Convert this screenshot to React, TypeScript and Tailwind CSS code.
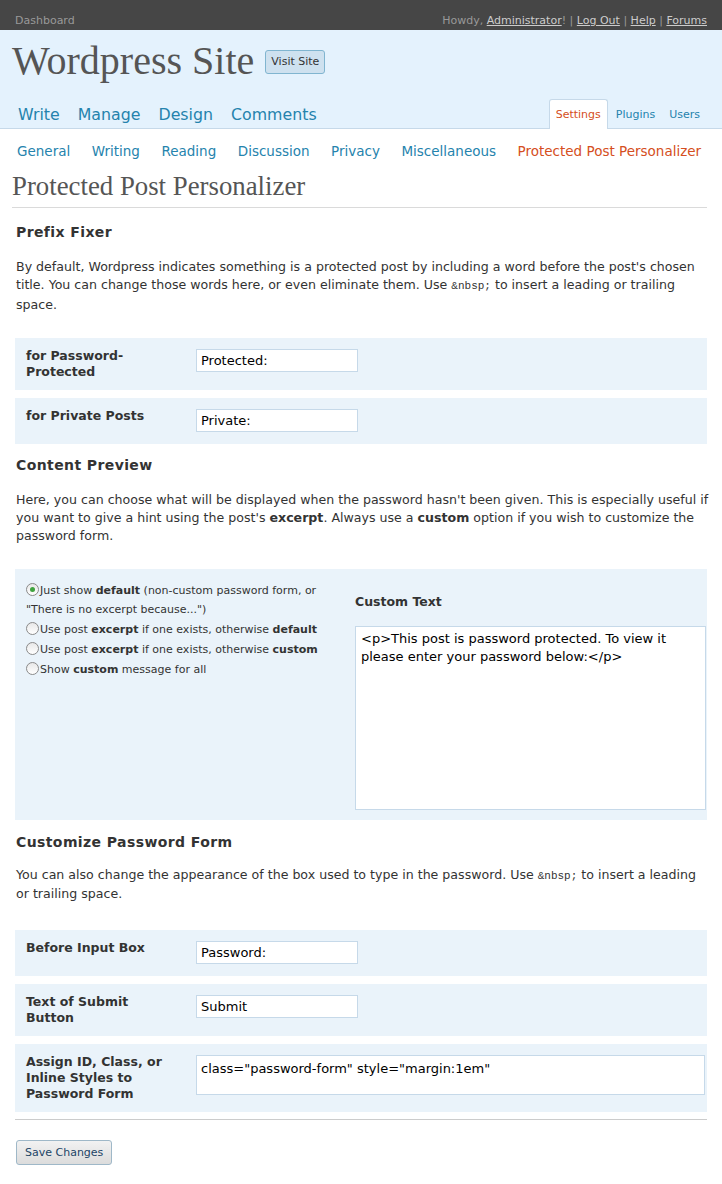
import React from "react";

const Radio = ({ checked = false }: { checked?: boolean }) => (
  <span className="relative inline-block w-[13px] h-[13px] rounded-full border border-[#8a8a8a] bg-gradient-to-b from-[#e8e8e8] to-white align-[-2px] mr-[1px]">
    {checked && <span className="absolute left-[3px] top-[3px] w-[5px] h-[5px] rounded-full bg-[#3fa33f]" />}
  </span>
);

const FieldRow = ({
  label,
  value,
  wide = false,
}: {
  label: string;
  value: string;
  wide?: boolean;
}) => (
  <div className="flex items-start bg-[#eaf3fa] py-[10px] pl-[11px] mb-[8px]">
    <div className="w-[170px] pr-[22px] text-[12.5px] leading-[16px] font-bold text-[#333]">{label}</div>
    {wide ? (
      <div className="mt-[1px] w-[509px] h-[40px] bg-white border border-[#c6d9e9] px-[4px] pt-[3px] text-[13px] text-black">
        {value}
      </div>
    ) : (
      <div className="mt-[1px] mb-[2px] w-[162px] h-[23px] bg-white border border-[#c6d9e9] px-[4px] flex items-center text-[13px] text-black">
        {value}
      </div>
    )}
  </div>
);

const Nbsp = () => <code className="font-['Liberation_Mono',monospace] text-[11px]">&amp;nbsp;</code>;

export default function App() {
  const subnav = ["General", "Writing", "Reading", "Discussion", "Privacy", "Miscellaneous"];

  return (
    <div className="min-h-[1184px] bg-white font-['DejaVu_Sans',sans-serif] text-[#333]">
      {/* admin bar */}
      <div className="h-[30px] bg-[#464646] flex items-center justify-between pl-[15px] pr-[15px] pt-[12px] text-[11px]">
        <span className="text-[#999]">Dashboard</span>
        <span className="text-[#999]">
          Howdy, <a className="text-[#ccc] underline">Administrator</a>! |{" "}
          <a className="text-[#ccc] underline">Log Out</a> | <a className="text-[#ccc] underline">Help</a> |{" "}
          <a className="text-[#ccc] underline">Forums</a>
        </span>
      </div>

      {/* header */}
      <div className="h-[99px] bg-[#e4f2fd] border-b border-[#c6d9e9] flex flex-col">
        <div className="flex items-center pl-[12px] pt-[8px]">
          <h1 className="font-['Liberation_Serif',serif] text-[40px] leading-[46px] text-[#555]">Wordpress Site</h1>
          <span className="ml-[11px] mt-[2px] h-[24px] px-[5px] flex items-center bg-[#cee1ef] border border-[#80b5d0] rounded-[3px] text-[11px] text-[#333]">
            Visit Site
          </span>
        </div>
        <div className="mt-auto flex items-end justify-between pl-[18px] pr-[22px]">
          <div className="flex gap-[18px] text-[15.8px] text-[#2583ad] pb-[1px]">
            <span>Write</span>
            <span>Manage</span>
            <span>Design</span>
            <span>Comments</span>
          </div>
          <div className="flex items-end text-[11px] -mb-[1px]">
            <span className="h-[30px] px-[6px] pt-[2px] flex items-center bg-white border border-b-0 border-[#c6d9e9] rounded-t-[3px] text-[#d54e21]">
              Settings
            </span>
            <span className="h-[30px] pt-[2px] flex items-center ml-[8px] text-[#2583ad]">Plugins</span>
            <span className="h-[30px] pt-[2px] flex items-center ml-[14px] text-[#2583ad]">Users</span>
          </div>
        </div>
      </div>

      {/* sub nav */}
      <div className="h-[44px] flex items-center gap-[21.5px] pl-[17px] text-[13.5px] text-[#2583ad]">
        {subnav.map((s) => (
          <span key={s}>{s}</span>
        ))}
        <span className="text-[#d54e21]">Protected Post Personalizer</span>
      </div>

      <div className="pl-[12px] pr-[15px]">
        <h2 className="font-['Liberation_Serif',serif] text-[26.8px] leading-[30px] text-[#555] -mt-[2px] pb-[6px] border-b border-[#dadada]">
          Protected Post Personalizer
        </h2>

        <div className="pl-[3px]">
          {/* Prefix Fixer */}
          <h3 className="mt-[14px] pl-[1px] text-[14px] leading-[20px] font-bold tracking-[0.4px] text-[#333]">Prefix Fixer</h3>
          <p className="mt-[16px] pl-[1px] text-[12.6px] leading-[18.3px] text-[#333] whitespace-nowrap">
            By default, Wordpress indicates something is a protected post by including a word before the post's chosen
            <br />
            title. You can change those words here, or even eliminate them. Use <Nbsp /> to insert a leading or trailing
            <br />
            space.
          </p>
          <div className="mt-[24px]">
            <FieldRow label="for Password-Protected" value="Protected:" />
            <FieldRow label="for Private Posts" value="Private:" />
          </div>

          {/* Content Preview */}
          <h3 className="mt-[11px] pl-[1px] text-[14px] leading-[20px] font-bold tracking-[0.4px] text-[#333]">Content Preview</h3>
          <p className="mt-[16px] pl-[1px] text-[12.6px] leading-[18.3px] text-[#333] whitespace-nowrap">
            Here, you can choose what will be displayed when the password hasn't been given. This is especially useful if
            <br />
            you want to give a hint using the post's <b>excerpt</b>. Always use a <b>custom</b> option if you wish to
            customize the
            <br />
            password form.
          </p>
          <div className="mt-[23px] flex bg-[#eaf3fa] pb-[10px]">
            <div className="w-[340px] pl-[11px] pr-[20px] pt-[12px] text-[11px] leading-[19.7px] text-[#333]">
              <div>
                <Radio checked />
                Just show <b>default</b> (non-custom password form, or "There is no excerpt because...")
              </div>
              <div>
                <Radio />
                Use post <b>excerpt</b> if one exists, otherwise <b>default</b>
              </div>
              <div>
                <Radio />
                Use post <b>excerpt</b> if one exists, otherwise <b>custom</b>
              </div>
              <div>
                <Radio />
                Show <b>custom</b> message for all
              </div>
            </div>
            <div className="w-[351px] pt-[23px]">
              <div className="text-[12.5px] leading-[20px] font-bold text-[#333]">Custom Text</div>
              <div className="mt-[14px] h-[184px] bg-white border border-[#c6d9e9] px-[5px] pt-[3px] text-[13px] leading-[18px] text-black">
                &lt;p&gt;This post is password protected. To view it please enter your password below:&lt;/p&gt;
              </div>
            </div>
          </div>

          {/* Customize Password Form */}
          <h3 className="mt-[12px] pl-[1px] text-[14px] leading-[20px] font-bold tracking-[0.4px] text-[#333]">
            Customize Password Form
          </h3>
          <p className="mt-[14px] pl-[1px] text-[12.6px] leading-[18.3px] text-[#333] whitespace-nowrap">
            You can also change the appearance of the box used to type in the password. Use <Nbsp /> to insert a leading
            <br />
            or trailing space.
          </p>
          <div className="mt-[27px]">
            <FieldRow label="Before Input Box" value="Password:" />
            <FieldRow label="Text of Submit Button" value="Submit" />
            <FieldRow label="Assign ID, Class, or Inline Styles to Password Form" value={'class="password-form" style="margin:1em"'} wide />
          </div>
          <div className="-mt-[1px] border-t border-[#ccc]" />
          <button className="mt-[20px] ml-[1px] h-[25px] px-[8px] bg-gradient-to-b from-[#f2f2f2] to-[#dcdcdc] border border-[#9fb8c8] rounded-[3px] text-[11px] text-[#246]">
            Save Changes
          </button>
        </div>
      </div>
    </div>
  );
}
